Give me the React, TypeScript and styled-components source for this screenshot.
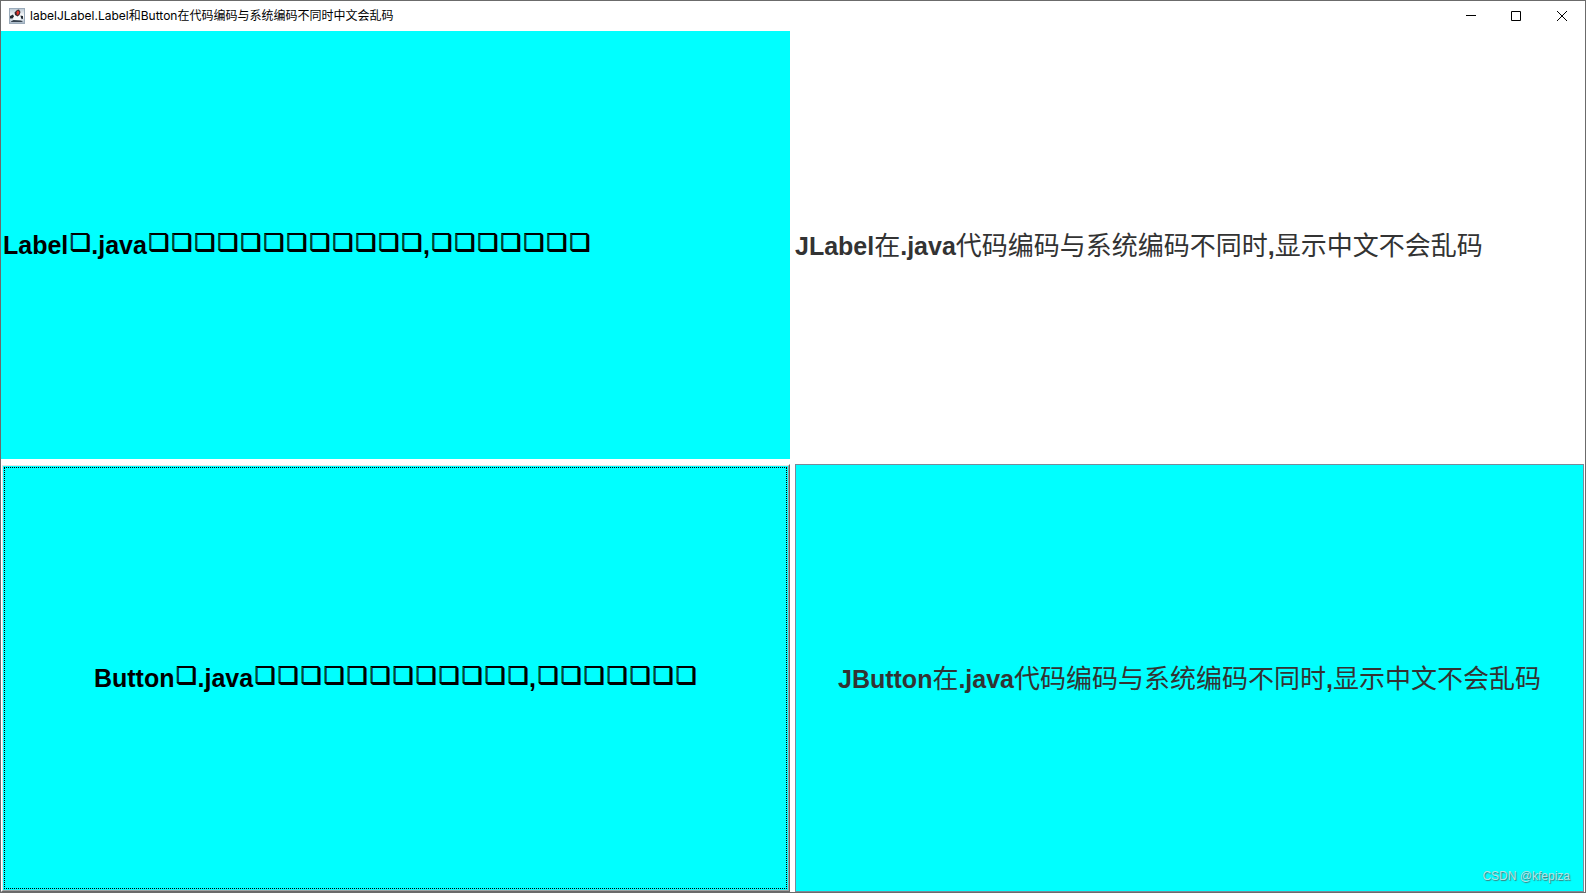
import React from "react";
import styled, { createGlobalStyle } from "styled-components";

const GlobalStyle = createGlobalStyle`
  * { box-sizing: border-box; }
  body { margin: 0; background: #ffffff; }
`;

const Frame = styled.div`
  position: relative;
  display: flex;
  flex-direction: column;
  min-height: 100vh;
  border: 1px solid #6b6b6b;
  background: #ffffff;
`;

const TitleBar = styled.header`
  display: flex;
  align-items: center;
  height: 30px;
  padding-left: 8px;
`;

const Title = styled.h1`
  flex: 1;
  margin: 0 0 0 5px;
  font: 400 12px/16px Inter, "Noto Sans CJK SC", sans-serif;
  color: #000000;
  white-space: nowrap;
`;

const WindowButton = styled.button`
  display: flex;
  align-items: center;
  justify-content: center;
  width: 46px;
  height: 28px;
  padding: 0;
  border: 0;
  background: transparent;
`;

const Grid = styled.main`
  flex: 1;
  display: grid;
  grid-template-columns: 1fr 1fr;
  grid-template-rows: 1fr 1fr;
  gap: 5px;
  padding-right: 1px;
`;

const textStyle = `
  font: 700 25px/30px "Liberation Sans", "DejaVu Sans", "Noto Sans CJK SC", sans-serif;
  white-space: nowrap;
`;

const AwtLabel = styled.div`
  ${textStyle}
  display: flex;
  align-items: center;
  padding-left: 2px;
  background: #00ffff;
  color: #000000;
`;

const SwingLabel = styled.div`
  ${textStyle}
  display: flex;
  align-items: center;
  color: #333333;
`;

const AwtButton = styled.button`
  ${textStyle}
  display: flex;
  padding: 0;
  background: #00ffff;
  color: #000000;
  border: 1px solid;
  border-color: #ffffff #696969 #696969 #ffffff;
`;

const FocusBevel = styled.span`
  flex: 1;
  align-self: stretch;
  display: flex;
  padding: 1px;
  border: 1px solid;
  border-color: #e3e3e3 #a0a0a0 #a0a0a0 #e3e3e3;
`;

const FocusRing = styled.span`
  flex: 1;
  display: flex;
  align-items: center;
  justify-content: center;
  border: 1px dotted #000000;
`;

const SwingButton = styled.button`
  ${textStyle}
  padding: 0;
  background: #00ffff;
  color: #333333;
  border: 1px solid #7a8a99;
`;

const Han = styled.span`
  font-family: "Noto Sans CJK SC", sans-serif;
  font-size: 26px;
  font-weight: 400;
`;

const Box = styled.span`
  display: inline-block;
  width: 23px;
  text-align: right;
  font-family: "DejaVu Sans", sans-serif;
  font-size: 23px;
  font-weight: 700;
  line-height: 1;
  vertical-align: 3px;
  text-shadow: -1px -1px 0 #000000;
`;

const Watermark = styled.div`
  position: absolute;
  right: 15px;
  bottom: 8px;
  font: 400 12px/16px "Liberation Sans", sans-serif;
  color: #b4e4e4;
  text-shadow: 1px 1px 1px #407878;
`;

const JavaIcon = () => (
  <svg width="16" height="16" viewBox="0 0 16 16" aria-hidden="true">
    <defs>
      <linearGradient id="cup" x1="0" y1="0" x2="0" y2="1">
        <stop offset="0" stopColor="#b9c6d2" />
        <stop offset="0.5" stopColor="#ffffff" />
        <stop offset="1" stopColor="#a3b4c4" />
      </linearGradient>
    </defs>
    <rect x="0.5" y="0.5" width="15" height="15" fill="url(#cup)" stroke="#9aabba" />
    <path d="M8 2L10 1.500L11.500 4L10.500 7L8.500 8.500L6 7L5.500 4.500Z" fill="#3a2a2e" />
    <path d="M8.500 2.500L10.500 4L9.500 6.500L8 7L7.500 4.500Z" fill="#e8322c" />
    <path d="M1 8L4 6.500L5 8.500L3.500 10.500H1Z" fill="#222b33" />
    <path d="M11.500 7.500L14 8V11L12 10.500Z" fill="#222b33" />
    <path d="M5 9H11.500L12 12.500H4Z" fill="#f6f9fb" />
    <path d="M2 13.500L4.500 12L12 12.500L14 14H2Z" fill="#35424e" />
  </svg>
);

const Glyph = ({ d }: { d: string }) => (
  <svg width="11" height="11" viewBox="0 0 11 11" fill="none" stroke="#000000" aria-hidden="true">
    <path d={d} />
  </svg>
);

const controls = [
  { label: "Minimize", d: "M1 4.500H11" },
  { label: "Maximize", d: "M0.500 0.500H9.500V9.500H0.500Z" },
  { label: "Close", d: "M0 0L10 10M10 0L0 10" },
];

const Boxes = ({ count }: { count: number }) => (
  <>
    {Array.from({ length: count }, (_, i) => (
      <Box key={i}>❑</Box>
    ))}
  </>
);

const BrokenText = ({ name }: { name: string }) => (
  <span>
    {name}
    <Boxes count={1} />
    .java
    <Boxes count={12} />,<Boxes count={7} />
  </span>
);

const ProperText = ({ name }: { name: string }) => (
  <span>
    {name}
    <Han>在</Han>.java<Han>代码编码与系统编码不同时</Han>,<Han>显示中文不会乱码</Han>
  </span>
);

export default function App() {
  return (
    <Frame lang="zh-CN">
      <GlobalStyle />
      <TitleBar>
        <JavaIcon />
        <Title>labelJLabel.Label和Button在代码编码与系统编码不同时中文会乱码</Title>
        {controls.map((c) => (
          <WindowButton key={c.label} type="button" aria-label={c.label}>
            <Glyph d={c.d} />
          </WindowButton>
        ))}
      </TitleBar>
      <Grid>
        <AwtLabel>
          <BrokenText name="Label" />
        </AwtLabel>
        <SwingLabel>
          <ProperText name="JLabel" />
        </SwingLabel>
        <AwtButton type="button">
          <FocusBevel>
            <FocusRing>
              <BrokenText name="Button" />
            </FocusRing>
          </FocusBevel>
        </AwtButton>
        <SwingButton type="button">
          <ProperText name="JButton" />
        </SwingButton>
      </Grid>
      <Watermark>CSDN @kfepiza</Watermark>
    </Frame>
  );
}
